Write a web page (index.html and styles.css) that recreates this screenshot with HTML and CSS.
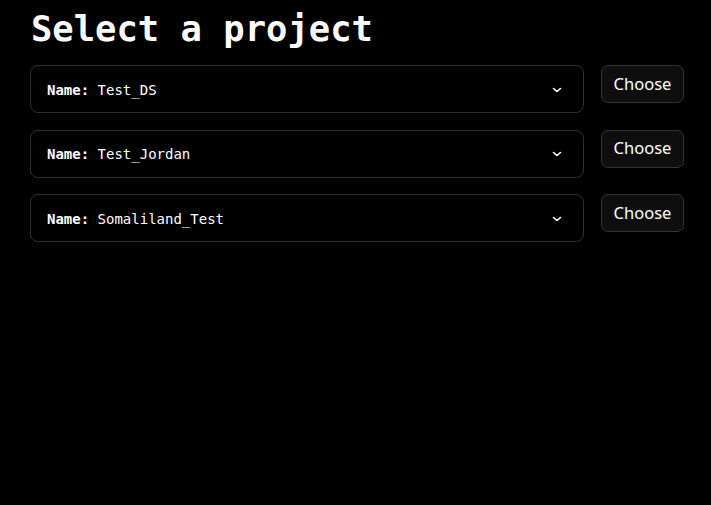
FILE: index.html
```html
<!DOCTYPE html>
<html>
<head>
<meta charset="utf-8">
<link rel="stylesheet" href="styles.css">
</head>
<body>
<main class="page">
  <h1 class="title">Select a project</h1>
  <ul class="projects">
    <li class="row">
      <div class="item">
        <span class="label"><b>Name:</b> Test_DS</span>
        <svg class="chev" width="12" height="8" viewBox="0 0 12 8"><path d="M2.5 2.5 L6 5.5 L9.5 2.5" fill="none" stroke="#fff" stroke-width="1.6" stroke-linecap="round" stroke-linejoin="round"/></svg>
      </div>
      <button class="choose">Choose</button>
    </li>
    <li class="row">
      <div class="item">
        <span class="label"><b>Name:</b> Test_Jordan</span>
        <svg class="chev" width="12" height="8" viewBox="0 0 12 8"><path d="M2.5 2.5 L6 5.5 L9.5 2.5" fill="none" stroke="#fff" stroke-width="1.6" stroke-linecap="round" stroke-linejoin="round"/></svg>
      </div>
      <button class="choose">Choose</button>
    </li>
    <li class="row">
      <div class="item">
        <span class="label"><b>Name:</b> Somaliland_Test</span>
        <svg class="chev" width="12" height="8" viewBox="0 0 12 8"><path d="M2.5 2.5 L6 5.5 L9.5 2.5" fill="none" stroke="#fff" stroke-width="1.6" stroke-linecap="round" stroke-linejoin="round"/></svg>
      </div>
      <button class="choose">Choose</button>
    </li>
  </ul>
</main>
</body>
</html>
```
FILE: styles.css
```css
html, body {
  margin: 0;
  background: #000;
  color: #fff;
}
.page {
  padding: 7px 27px 0 30px;
  font-family: "DejaVu Sans Mono", "Liberation Mono", monospace;
}
.title {
  margin: 0 0 14px 1px;
  font-size: 35.5px;
  line-height: 44px;
  font-weight: 700;
  letter-spacing: 0;
}
.projects {
  list-style: none;
  margin: 0;
  padding: 0;
  display: flex;
  flex-direction: column;
  gap: 16.5px;
}
.row {
  display: flex;
  align-items: flex-start;
  gap: 17px;
}
.item {
  flex: 1;
  height: 48px;
  box-sizing: border-box;
  border: 1px solid #303030;
  border-radius: 8px;
  display: flex;
  align-items: center;
  justify-content: space-between;
  padding: 0 20px 0 16px;
}
.label {
  font-size: 14px;
  padding-top: 1px;
}
.label b {
  font-weight: 700;
}
.chev {
  display: block;
  margin-top: 1px;
}
.choose {
  width: 83px;
  height: 38px;
  box-sizing: border-box;
  background: #0e0e0e;
  color: #fff;
  border: 1px solid #333;
  border-radius: 7px;
  font-family: "Noto Sans", "Open Sans", sans-serif;
  font-size: 16.5px;
  padding: 0 0 2px;
  cursor: pointer;
}
```
